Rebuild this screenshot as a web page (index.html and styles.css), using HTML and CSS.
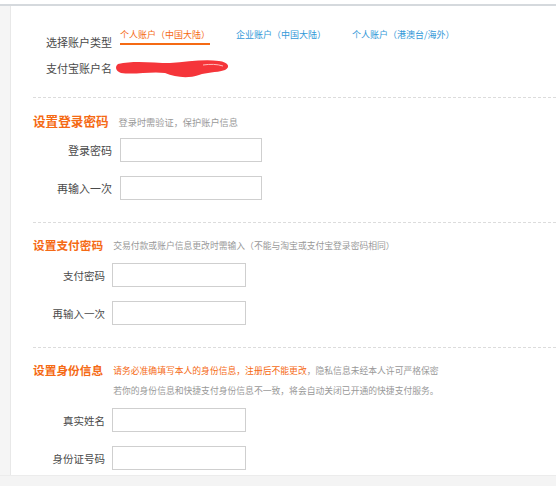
FILE: index.html
```html
<!DOCTYPE html>
<html lang="zh-CN">
<head>
    <meta charset="UTF-8">
    <meta name="viewport" content="width=device-width, initial-scale=1.0">
    <title>注册支付宝账户</title>
    <link rel="stylesheet" href="styles.css">
</head>
<body>
    <div class="frame">
        <div class="page">
            <div class="side"></div>
            <div class="main">
                <div class="account">
                    <div class="row">
                        <div class="row-label">选择账户类型</div>
                        <div class="tabs">
                            <a class="tab active">个人账户（中国大陆）</a>
                            <a class="tab">企业账户（中国大陆）</a>
                            <a class="tab">个人账户（港澳台/海外）</a>
                        </div>
                    </div>
                    <div class="row">
                        <div class="row-label">支付宝账户名</div>
                        <svg class="scribble" width="116" height="22" viewBox="0 0 116 22">
                            <path d="M3 6 C 20 2, 38 5, 55 5 C 72 4, 88 1, 104 3 C 113 4, 116 9, 110 12 C 100 15, 92 14, 84 17 C 72 21, 60 19, 50 15 C 36 13, 20 17, 6 15 C 0 13, 0 8, 3 6 Z" fill="#f5353a"/>
                            <path d="M88 7 C 95 6, 102 6, 108 8" stroke="#fbb" stroke-width="1" fill="none"/>
                        </svg>
                    </div>
                </div>

                <div class="section section-lg">
                    <div class="section-head">
                        <div class="section-title">设置登录密码</div>
                        <div class="section-tip">登录时需验证，保护账户信息</div>
                    </div>
                    <div class="field">
                        <label class="field-label">登录密码</label>
                        <input class="field-input" type="password">
                    </div>
                    <div class="field">
                        <label class="field-label">再输入一次</label>
                        <input class="field-input" type="password">
                    </div>
                </div>

                <div class="section">
                    <div class="section-head">
                        <div class="section-title">设置支付密码</div>
                        <div class="section-tip">交易付款或账户信息更改时需输入（不能与淘宝或支付宝登录密码相同）</div>
                    </div>
                    <div class="field">
                        <label class="field-label">支付密码</label>
                        <input class="field-input" type="password">
                    </div>
                    <div class="field">
                        <label class="field-label">再输入一次</label>
                        <input class="field-input" type="password">
                    </div>
                </div>

                <div class="section last">
                    <div class="section-head">
                        <div class="section-title">设置身份信息</div>
                        <div class="section-tip"><span class="warn">请务必准确填写本人的身份信息，注册后不能更改</span>，隐私信息未经本人许可严格保密<br>若你的身份信息和快捷支付身份信息不一致，将会自动关闭已开通的快捷支付服务。</div>
                    </div>
                    <div class="field">
                        <label class="field-label">真实姓名</label>
                        <input class="field-input" type="text">
                    </div>
                    <div class="field">
                        <label class="field-label">身份证号码</label>
                        <input class="field-input" type="text">
                    </div>
                </div>
            </div>
        </div>
        <div class="bottom"></div>
    </div>
</body>
</html>
```

FILE: styles.css
```css
body {
    margin: 0;
    font-family: "Noto Sans CJK SC", "DejaVu Sans", sans-serif;
    background: #fff;
    overflow: hidden;
}
.frame {
    width: 556px;
    margin-top: 4px;
    border-top: 2px solid #d5d9dd;
}
.page {
    display: flex;
    height: 469px;
}
.side {
    width: 10px;
    background: #f5f5f5;
    border-right: 1px solid #e8e8e8;
}
.main {
    flex: 1;
    padding-left: 22px;
}
.bottom {
    height: 10px;
    background: #f4f4f4;
    border-top: 1px solid #ececec;
}

/* account type */
.account {
    padding: 22px 0 17px;
    border-bottom: 1px dashed #dcdcdc;
}
.row {
    display: flex;
    height: 26px;
}
.row-label {
    width: 79px;
    margin-top: 7px;
    font-size: 11px;
    line-height: 14px;
    color: #4a4a4a;
    text-align: right;
}
.tabs {
    display: flex;
    gap: 26px;
    margin-left: 8px;
}
.tab {
    font-size: 9px;
    line-height: 14px;
    height: 14px;
    color: #3398d8;
    cursor: pointer;
}
.tab.active {
    color: #f56a14;
    border-bottom: 2px solid #f56a14;
    padding-bottom: 1px;
}
.scribble {
    margin: 4px 0 0 3px;
}

/* sections */
.section {
    padding: 12px 0 22px;
    border-bottom: 1px dashed #dcdcdc;
}
.section.last {
    border-bottom: none;
    padding-bottom: 0;
}
.section-head {
    display: flex;
    align-items: flex-start;
    margin-bottom: 7px;
}
.section-title {
    font-size: 11.7px;
    line-height: 20px;
    font-weight: bold;
    color: #f56a14;
    margin-right: 10px;
    white-space: nowrap;
}
.section-tip {
    font-size: 8.8px;
    line-height: 20px;
    margin-top: 1px;
    color: #999;
    white-space: nowrap;
}
.section-tip .warn {
    color: #f56a14;
}
.field {
    display: flex;
    align-items: center;
    margin-bottom: 14px;
}
.field:last-child {
    margin-bottom: 0;
}
.field-label {
    width: 72px;
    margin-right: 7px;
    font-size: 10.5px;
    color: #4a4a4a;
    text-align: right;
}
.field-input {
    width: 134px;
    height: 24px;
    box-sizing: border-box;
    border: 1px solid #cfcfcf;
    padding: 0 4px;
    margin: 0;
    outline: none;
}

/* first block shows a bit larger */
.section-lg {
    padding-top: 13px;
}
.section-lg .section-head {
    margin-bottom: 6px;
}
.section-lg .section-title {
    font-size: 12.6px;
}
.section-lg .section-tip {
    font-size: 9.2px;
}
.section-lg .field-label {
    width: 79px;
    margin-right: 8px;
    font-size: 11px;
}
.section-lg .field-input {
    width: 142px;
}
```
